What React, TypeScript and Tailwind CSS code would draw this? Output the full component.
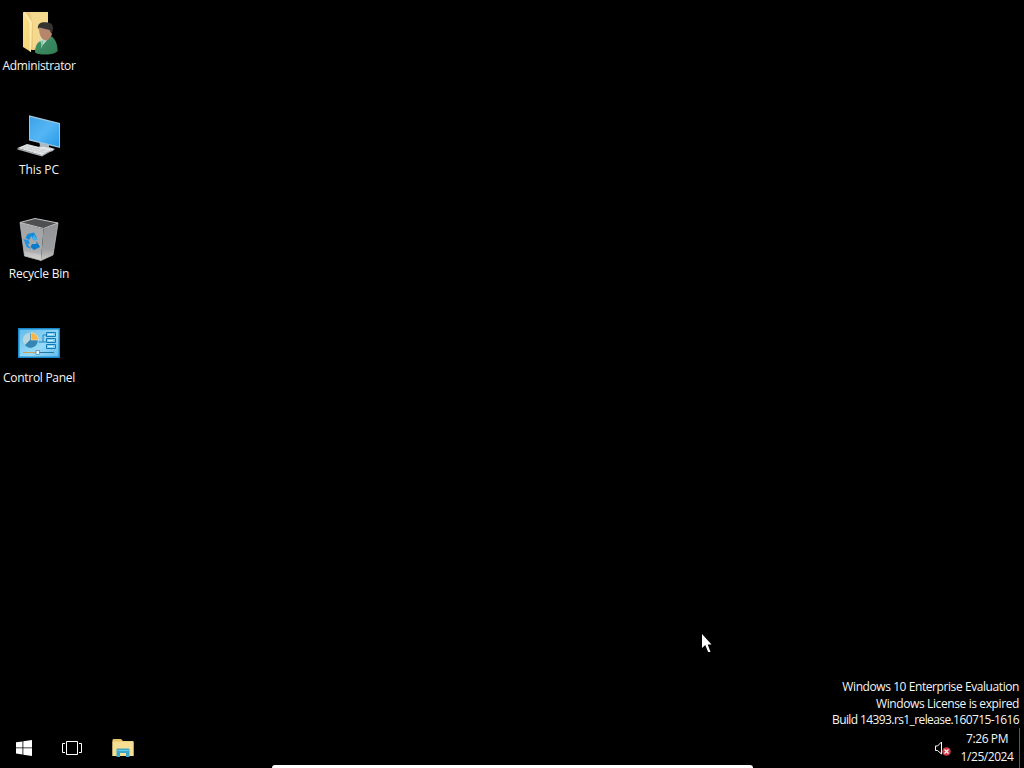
import type { ReactNode } from "react";

function UserFolderIcon() {
  return (
    <svg width="48" height="48" viewBox="0 0 48 48">
      <defs>
        <linearGradient id="fold" x1="0" x2="1" y1="0" y2="1">
          <stop offset="0" stopColor="#fbe08a" />
          <stop offset="1" stopColor="#f5d372" />
        </linearGradient>
        <linearGradient id="coat" x1="0" x2="1" y1="0" y2="1">
          <stop offset="0" stopColor="#43946a" />
          <stop offset="1" stopColor="#327c55" />
        </linearGradient>
      </defs>
      <path d="M10 3H33V41H17L10 38Z" fill="#ecca7c" />
      <path d="M15 3H33V39H18V15Z" fill="#f4d88e" />
      <path d="M8 3L16 13V43L8 38Z" fill="url(#fold)" />
      <path d="M8 3H10L17 13L16 43L14.500 42V14Z" fill="#fdebad" />
      <path d="M20 43.500C20 35 24 31 30 31L37 27.500C41 31 42.500 36 42.700 42C39 46.500 24 46.500 20 43.500Z" fill="url(#coat)" />
      <path d="M25 31L27 28L33 30L27 37Z" fill="#c4dfd0" />
      <path d="M26.500 32L28.500 31L27.500 37L26 40Z" fill="#7fc0a4" />
      <path d="M24 19C24 17 35 18 36.500 20C38.500 26 35 31 31 31.500C27 31 24 27 24 19Z" fill="#b5866c" />
      <path d="M23 20C22 14 27 12.500 33 13.500C39 14.500 39 20 36.500 25L34.500 21L24.500 18.500Z" fill="#353331" />
    </svg>
  );
}

function ComputerIcon() {
  return (
    <svg width="48" height="48" viewBox="0 1 48 48">
      <defs>
        <linearGradient id="screen" x1="0" x2="1" y1="0" y2="1">
          <stop offset="0" stopColor="#3ca4e8" />
          <stop offset="0.500" stopColor="#55b5f4" />
          <stop offset="1" stopColor="#259be9" />
        </linearGradient>
      </defs>
      <path d="M24 29L34 31V35L40 37L37 39.500L28 40L21 37L25 34Z" fill="#aeb7bd" />
      <path d="M21 36.500L28 34.500L39 37L36 38.500L28 39Z" fill="#e0e4e6" />
      <path d="M14 3.300L45 11V36L14 28.500Z" fill="#9cc6de" />
      <path d="M15 5L44 12V34.500L15 27.300Z" fill="url(#screen)" />
      <path d="M2.500 36L12 32L36.500 38L27 43.500Z" fill="#e2e5e6" />
      <path d="M2.500 36V37.500L27 44.500L36.500 39V38L27 43Z" fill="#a9afb2" />
      <path d="M7 35.500L31 41M10 34L34 39.500M6 37L15 33M11 38.500L20 34.500M16 40L25 36M21 41.500L30 37.500" stroke="#c0c5c7" strokeWidth=".6" />
    </svg>
  );
}

function RecycleBinIcon() {
  return (
    <svg width="48" height="48" viewBox="0 1 48 48">
      <defs>
        <linearGradient id="bin" x1="0" x2="0" y1="0" y2="1">
          <stop offset="0" stopColor="#a2a4a6" />
          <stop offset="0.750" stopColor="#a9abad" />
          <stop offset="1" stopColor="#d2d1d0" />
        </linearGradient>
        <linearGradient id="binSide" x1="0" x2="0" y1="0" y2="1">
          <stop offset="0" stopColor="#919396" />
          <stop offset="0.700" stopColor="#9c9ea0" />
          <stop offset="1" stopColor="#cfcac6" />
        </linearGradient>
      </defs>
      <path d="M5 6.500L28.500 13L26 44.500L9.500 40Z" fill="url(#bin)" />
      <path d="M28.500 13L43 7L38 39L26 44.500Z" fill="url(#binSide)" />
      <path d="M9 35L26.500 39L26 44L9.500 40Z" fill="#d8d5d2" opacity=".4" />
      <path d="M5 6.500L20 2.500L43 7L28.500 12.500Z" fill="#4e4f51" stroke="#c5c7c8" strokeWidth="1" />
      <path d="M5 6.500L9.500 40L26 44.500L38 39L43 7" fill="none" stroke="#b9babb" strokeWidth=".8" />
      <path d="M12.500 18L19 16.500L22 22L18 23L16.500 20L14 24L10.500 22Z" fill="#148bd8" />
      <path d="M8.500 23L14 24.500L14.500 28L12.500 28L16 33L11.500 31Z" fill="#2093dd" />
      <path d="M17 28L21.500 28V25L25 31L19 34L15.500 31Z" fill="#087cca" />
      <path d="M19 19L23 23.500L19 25L17 22.500Z" fill="#4aadea" />
    </svg>
  );
}

function ControlPanelIcon() {
  return (
    <svg width="48" height="48" viewBox="0 1 48 48">
      <defs>
        <linearGradient id="panel" x1="0" x2="1" y1="0" y2="1">
          <stop offset="0" stopColor="#62bceb" />
          <stop offset="0.600" stopColor="#98daf7" />
          <stop offset="1" stopColor="#61bdf0" />
        </linearGradient>
      </defs>
      <path d="M3 8H45V38H3Z" fill="#1789ca" />
      <path d="M4.500 9.500H43.500V36.500H4.500Z" fill="url(#panel)" />
      <circle cx="15.500" cy="20.500" r="7" fill="#2e7fae" />
      <path d="M15 20L10 25A7 7 0 0 1 15 13Z" fill="#b9d5de" />
      <path d="M15.500 20.500L10.500 25.500A7 7 0 0 0 22.500 20.500Z" fill="#3486b5" />
      <path d="M16 20V12.500A7.500 7.500 0 0 1 23.500 20Z" fill="#f4b64c" stroke="#f0e5c2" strokeWidth=".6" />
      <path d="M23.500 22H28V15H31M28 22H31" fill="none" stroke="#2583b9" />
      <path d="M31.500 12.500H40.500V16.500H31.500ZM31.500 18.500H40.500V22.500H31.500ZM31.500 24.500H40.500V28.500H31.500Z" fill="#7bd0f7" stroke="#1679b4" />
      <path d="M33 14.500H38M33 20.500H38M33 26.500H38" stroke="#cff0ff" />
      <path d="M8 32.500H22" stroke="#c6a264" />
      <path d="M23 32.500H39" stroke="#26779f" />
      <rect x="21" y="30.500" width="3.500" height="4" fill="#e9f6fc" stroke="#287ba6" strokeWidth=".6" />
    </svg>
  );
}

function DesktopItem({ label, tracking, children }: { label: string; tracking: string; children: ReactNode }) {
  return (
    <div className="flex h-[104px] w-[78px] flex-col items-center pt-[9px]">
      {children}
      <span className={`whitespace-nowrap text-[12px] leading-[18px] ${tracking}`}>{label}</span>
    </div>
  );
}

function Taskbar() {
  return (
    <footer className="flex h-10 items-center">
      <div className="flex w-12 justify-center">
        <svg width="16" height="16" viewBox="0 0 16 16" fill="#fff">
          <path d="M0 2.300L6.500 1.400V7.500H0ZM7.300 1.200L16 0V7.500H7.300ZM0 8.300H6.500V14.500L0 13.600ZM7.300 8.300H16V16L7.300 14.700Z" />
        </svg>
      </div>
      <div className="flex w-12 justify-center">
        <svg width="20" height="14" viewBox="0 0 20 14" fill="none" stroke="#fff">
          <path d="M4.500.5H15.500V13.500H4.500ZM3 2.500H.5V11.500H3M17 2.500H19.500V11.500H17" />
        </svg>
      </div>
      <div className="flex w-[54px] justify-center">
        <svg width="22" height="20" viewBox="0 0 22 20">
          <path d="M.5 2Q.5 1 1.500 1H9L11 3H20.500Q21.500 3 21.500 4V18H.5Z" fill="#e6c364" />
          <path d="M.5 3.500H21.500V18H.5Z" fill="#f6de94" />
          <path d="M4.500 11.500Q4.500 10.500 5.500 10.500H16.500Q17.500 10.500 17.500 11.500V19H14V15H8V19H4.500Z" fill="#3ba8c9" />
          <path d="M4.500 12H17.500V13H4.500Z" fill="#66c8df" />
        </svg>
      </div>
      <div className="ml-auto flex h-full items-center">
        <svg className="mr-[8px]" width="18" height="16" viewBox="0 0 18 16">
          <path d="M1.500 6H3.500L7.500 2V14L3.500 10.500H1.500Z" fill="none" stroke="#fff" />
          <circle cx="12.500" cy="11.500" r="4.300" fill="#d33b43" />
          <path d="M10.500 9.500L14.500 13.500M14.500 9.500L10.500 13.500" stroke="#fff" strokeWidth="1.200" />
        </svg>
        <div className="flex w-[54px] flex-col items-center text-[12px] leading-[18px]">
          <span className="whitespace-nowrap tracking-[-0.400px]">7:26 PM</span>
          <span className="whitespace-nowrap tracking-[-0.450px]">1/25/2024</span>
        </div>
        <div className="ml-[5px] mr-[4px] h-full w-px bg-[#5a5a5a]" />
      </div>
    </footer>
  );
}

export default function App() {
  return (
    <div className="relative flex h-[768px] w-[1024px] flex-col overflow-hidden bg-black font-['Open_Sans','Noto_Sans',sans-serif] text-[#f5f5f5]">
      <main className="flex min-h-0 flex-1 justify-between">
        <div className="flex flex-col">
          <DesktopItem label="Administrator" tracking="tracking-[-0.330px]"><UserFolderIcon /></DesktopItem>
          <DesktopItem label="This PC" tracking="tracking-[-0.100px]"><ComputerIcon /></DesktopItem>
          <DesktopItem label="Recycle Bin" tracking="tracking-[-0.200px]"><RecycleBinIcon /></DesktopItem>
          <DesktopItem label="Control Panel" tracking="tracking-[-0.280px]"><ControlPanelIcon /></DesktopItem>
        </div>
        <div className="flex flex-col items-end justify-end pr-[5px] text-[12px]">
          <span className="whitespace-nowrap leading-[17px] tracking-[-0.420px]">Windows 10 Enterprise Evaluation</span>
          <span className="whitespace-nowrap leading-[17px] tracking-[-0.390px]">Windows License is expired</span>
          <span className="whitespace-nowrap leading-[16px] tracking-[-0.600px]">Build 14393.rs1_release.160715-1616</span>
        </div>
      </main>
      <Taskbar />
      <div className="absolute bottom-0 left-[272px] h-[3px] w-[481px] rounded-t-[5px] bg-white" />
      <svg className="absolute left-[701px] top-[633px]" width="14" height="21" viewBox="0 0 14 21">
        <path d="M1 1V15L4.200 12L7.200 19H9.500L6.700 11.500H10.500Z" fill="#fff" />
      </svg>
    </div>
  );
}
